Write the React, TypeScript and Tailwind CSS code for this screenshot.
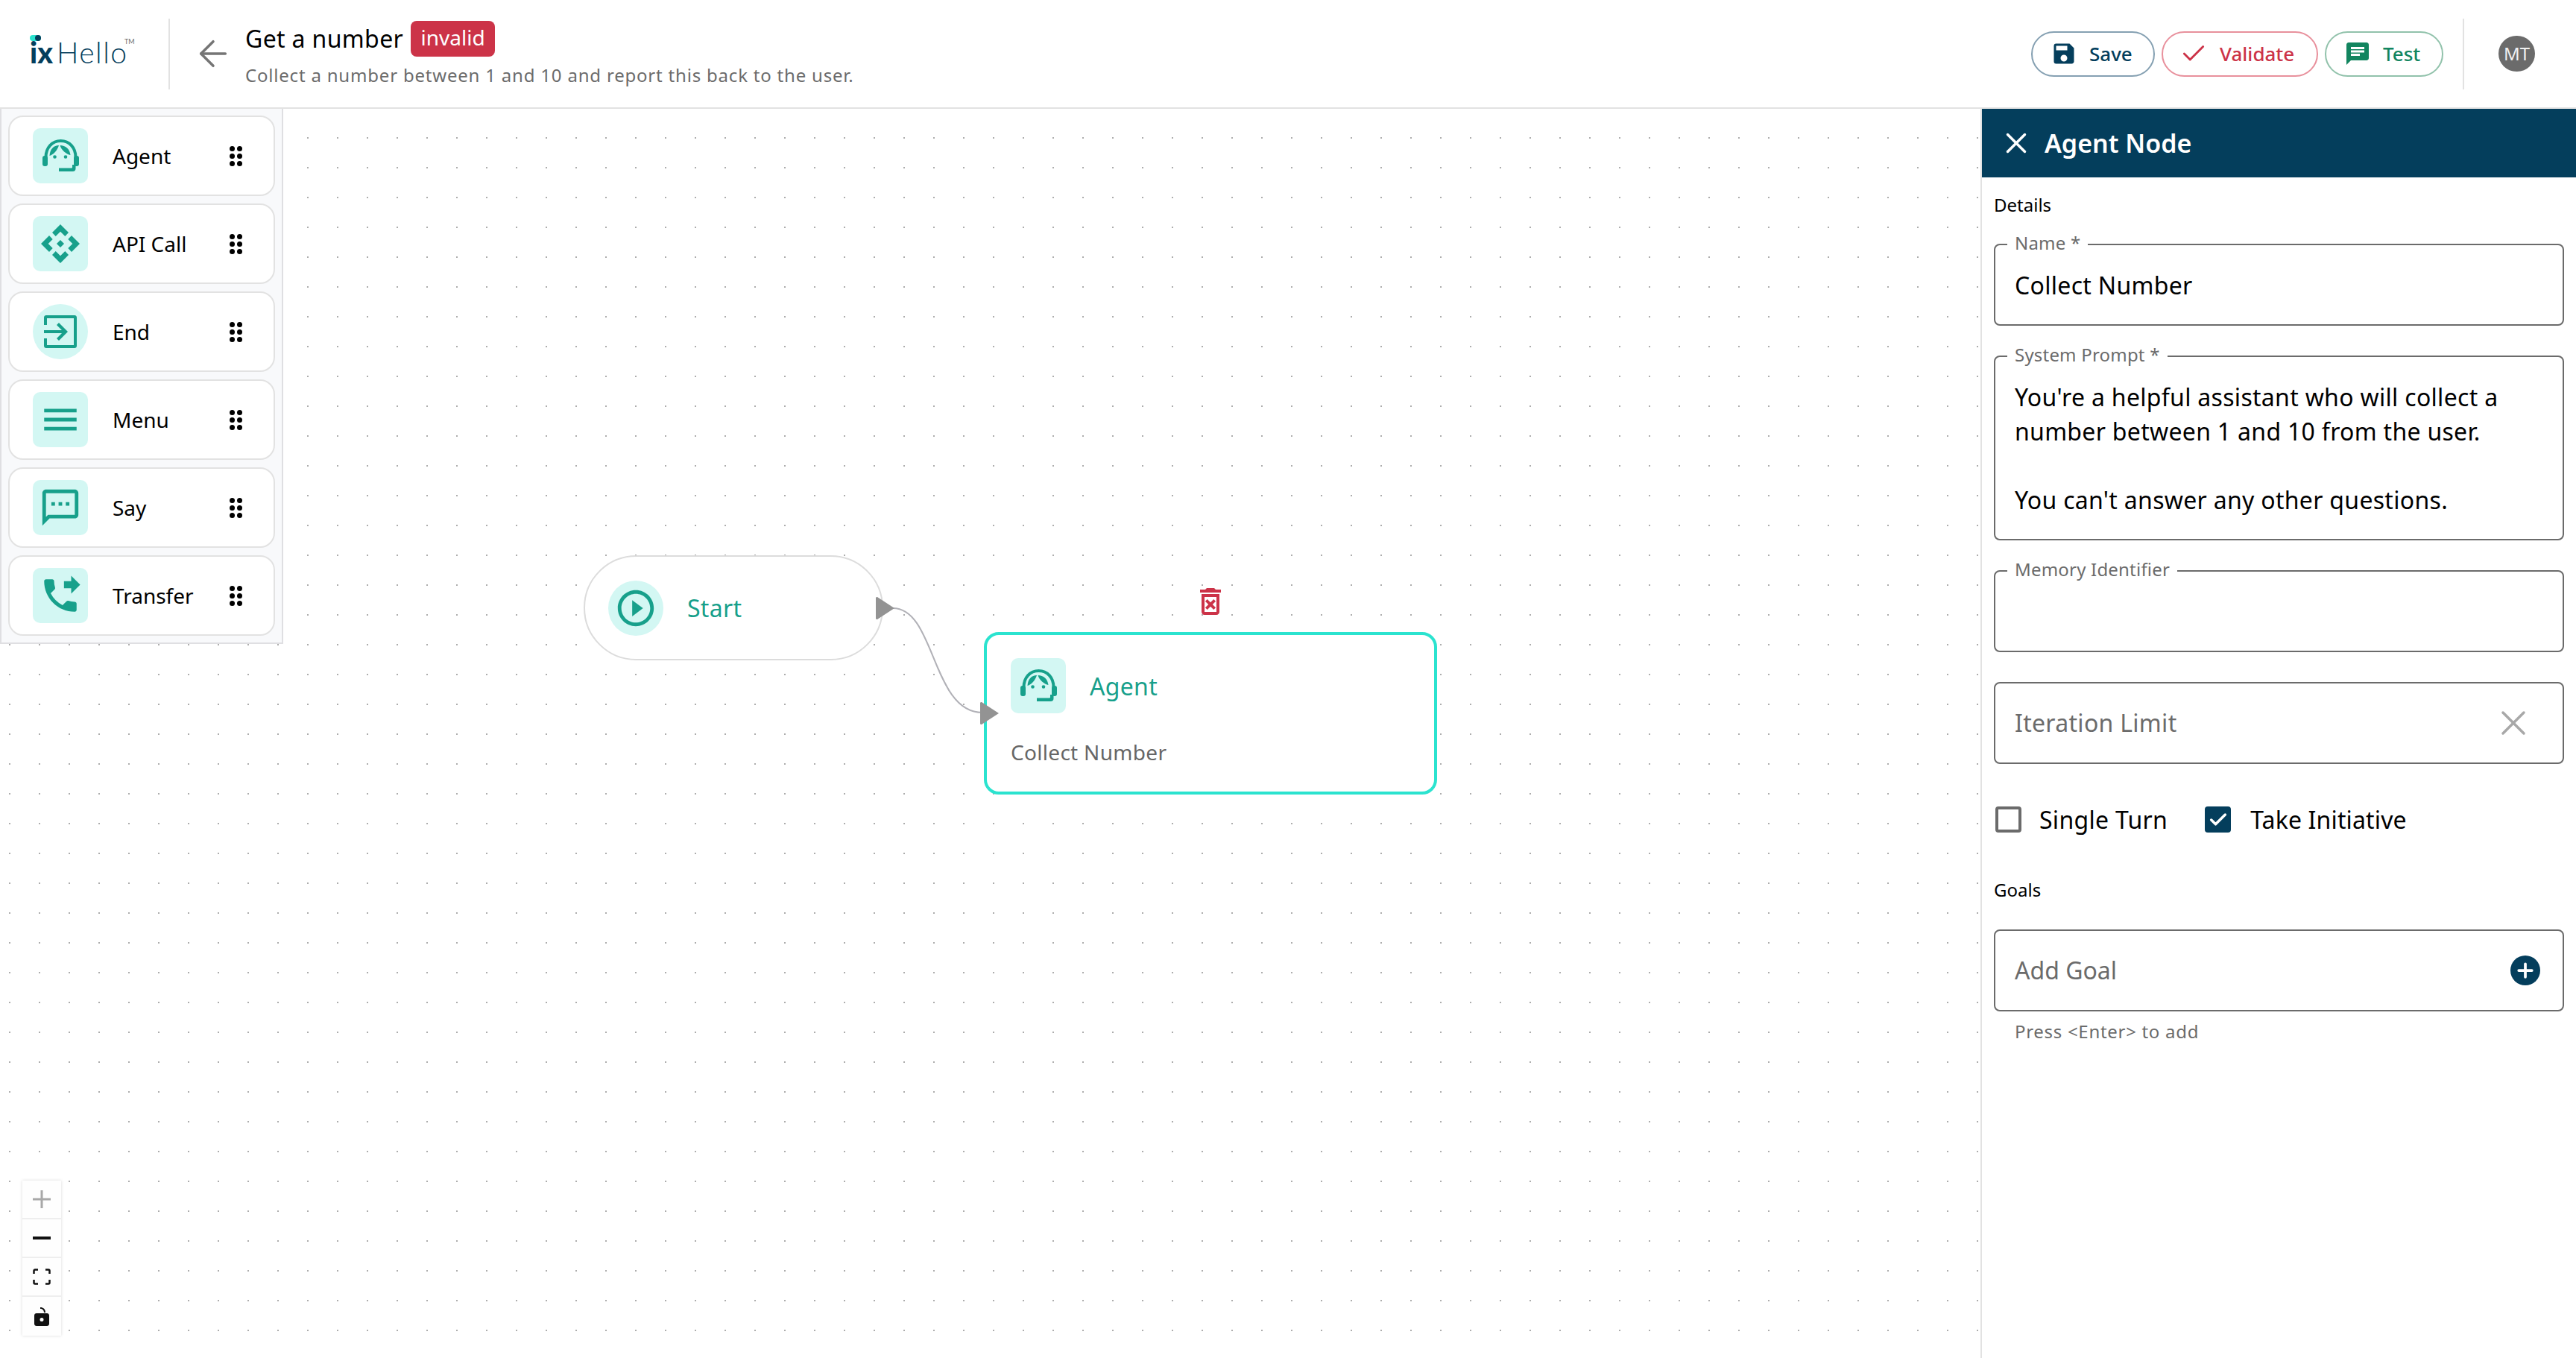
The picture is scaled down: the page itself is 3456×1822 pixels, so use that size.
import { Check, Plus, X, ArrowLeft } from "lucide-react";
import { MdChat, MdMenu, MdOutlineDeleteForever, MdOutlineSms, MdPhoneForwarded, MdPlayCircleOutline, MdSave } from "react-icons/md";

const teal = "#17a08b";

const AgentIcon = () => (
  <svg viewBox="0 0 49 44" className="w-[49px] h-[44px]" fill={teal}>
    <path d="M4.500 24C4.500 11 13 2 24.500 2S44.500 11 44.500 24" fill="none" stroke={teal} strokeWidth="4" />
    <rect x="0" y="22" width="7" height="14" rx="3" />
    <rect x="42" y="22" width="7" height="14" rx="3" />
    <path d="M22 8C15 8 10 13 9.500 22 15 20 19.500 15.500 22 8Z" />
    <path d="M23.500 8C25 14 32 20 37.500 21 36.500 13 31 8 23.500 8Z" />
    <circle cx="16.500" cy="23.500" r="2.300" />
    <circle cx="31" cy="23.500" r="2.300" />
    <path d="M44.500 34v5a4 4 0 0 1-4 4H22v-4.500h17a1 1 0 0 0 1-1V34Z" />
  </svg>
);

const ApiIcon = () => (
  <svg viewBox="0 0 52 52" className="w-[52px] h-[52px]" fill={teal}>
    <path d="M26 0l11 11-4.700 5L26 9.700 19.700 16 15 11Z" />
    <path d="M0 26l11-11 4.700 5L9.700 26l6 6L11 37Z" />
    <path d="M52 26 41 15l-4.700 5 6 6-6 6L41 37Z" />
    <path d="M26 52 15 41l4.700-5 6.300 6.300L32.300 36 37 41Z" />
    <path d="M26 21l5 5-5 5-5-5Z" />
  </svg>
);

const EndIcon = () => (
  <svg viewBox="0 0 44 44" className="w-11 h-11" fill={teal}>
    <path d="M3 0h38c1.700 0 3 1.300 3 3v38c0 1.700-1.300 3-3 3H3c-1.700 0-3-1.300-3-3V31h4v9h36V4H4v9H0V3c0-1.700 1.300-3 3-3Z" />
    <path d="M0 20h24l-7-7 3-3 12 12-12 12-3-3 7-7H0Z" />
  </svg>
);

const DragDots = () => (
  <div className="grid grid-cols-2 gap-x-[3px] gap-y-[3px] w-[17px]">
    {[0, 1, 2, 3, 4, 5].map((i) => (
      <span key={i} className="w-[7px] h-[7px] rounded-full bg-black" />
    ))}
  </div>
);

const items = [
  { label: "Agent", icon: <AgentIcon />, round: false },
  { label: "API Call", icon: <ApiIcon />, round: false },
  { label: "End", icon: <EndIcon />, round: true },
  { label: "Menu", icon: <MdMenu size={58} color={teal} />, round: false },
  { label: "Say", icon: <MdOutlineSms size={58} color={teal} />, round: false },
  { label: "Transfer", icon: <MdPhoneForwarded size={58} color={teal} />, round: false },
];

const Field = ({ label, children, className = "" }: { label: string; children?: React.ReactNode; className?: string }) => (
  <div className={`relative border-2 border-[#6b6b6b] rounded-[8px] pl-[26px] ${className}`}>
    <span className="absolute left-[16px] top-[-16px] px-[10px] bg-white text-[24px] leading-[26px] tracking-[0.2px] text-[#6b6b6b]">{label}</span>
    {children}
  </div>
);

const Handle = ({ className }: { className: string }) => (
  <svg className={`absolute ${className}`} width="26" height="32" viewBox="0 0 26 32">
    <path d="M2 1 25 16 2 31a1.500 1.500 0 0 1-2-1.500V2.500A1.500 1.500 0 0 1 2 1Z" fill="#939393" />
  </svg>
);

export default function App() {
  return (
    <div className="w-[3456px] h-[1822px] flex flex-col bg-white font-['Noto_Sans',sans-serif] overflow-hidden">
      <header className="h-[146px] shrink-0 flex items-center border-b-2 border-[#e2e2e2]">
        <div className="w-[228px] h-[95px] shrink-0 border-r-2 border-[#e2e2e2] flex items-center pl-[40px]">
          <div className="relative flex items-end h-[31px] mt-[-4px] font-['Lato',sans-serif] text-[#043e5c]">
            <span className="relative text-[39px] font-black leading-[31px]">
              ix
              <span className="absolute left-0 top-[-8px] w-[15px] h-[8px] rounded-full bg-[#2be3cf]">
                <span className="absolute right-0 top-0 w-[8px] h-[8px] rounded-full bg-[#043e5c]" />
              </span>
            </span>
            <span className="ml-[5px] text-[39px] font-light leading-[31px] tracking-[1.5px]">Hello</span>
            <span className="absolute left-[127px] top-[-4px] text-[9px] leading-[9px] text-[#6b6b6b]">TM</span>
          </div>
        </div>
        <ArrowLeft className="ml-[30px] w-[56px] h-[56px] text-[#757575]" strokeWidth={1.5} />
        <div className="ml-[15px] flex flex-col">
          <div className="flex items-center gap-[10px] h-[48px]">
            <span className="text-[32px] leading-[44px] tracking-[0.35px] text-black">Get a number</span>
            <span className="h-[48px] w-[113px] rounded-[8px] bg-[#cc3348] text-white text-[28px] leading-[44px] text-center">invalid</span>
          </div>
          <span className="text-[24px] leading-[32px] mt-[9px] text-[#6b6b6b] tracking-[0.8px]">
            Collect a number between 1 and 10 and report this back to the user.
          </span>
        </div>
        <div className="ml-auto flex items-center gap-[9px]">
          <button className="h-[61px] w-[166px] rounded-full border-2 border-[#85a0b2] flex items-center pl-[24px] gap-[16px] text-[26px] font-medium text-[#043e5c]">
            <MdSave size={36} color="#043e5c" />
            Save
          </button>
          <button className="h-[61px] w-[210px] rounded-full border-2 border-[#e8909c] flex items-center pl-[22px] gap-[16px] text-[26px] font-medium text-[#cc3348]">
            <Check className="w-[38px] h-[38px]" strokeWidth={1.8} />
            Validate
          </button>
          <button className="h-[61px] w-[159px] rounded-full border-2 border-[#91c2ab] flex items-center pl-[24px] gap-[16px] text-[26px] font-medium text-[#12855f]">
            <MdChat size={36} color="#12855f" />
            Test
          </button>
        </div>
        <div className="ml-[26px] w-[2px] h-[95px] bg-[#e2e2e2]" />
        <div className="ml-[46px] mr-[55px] w-[49px] h-[48px] rounded-full bg-[#6b6b6b] text-[#f0f0f0] text-[24px] leading-[48px] text-center">MT</div>
      </header>

      <div className="flex-1 flex min-h-0">
        <main className="relative flex-1 overflow-hidden bg-white bg-[radial-gradient(circle,#adadad_1.2px,transparent_1.4px)] bg-[size:40px_40px] bg-[position:-7px_-21px]">
          <aside className="absolute left-0 top-0 w-[380px] h-[718px] bg-[#f8f9fb] border-l-2 border-r-2 border-b-2 border-[#dfdfe2] pl-[9px] pr-[9px] pt-[9px] flex flex-col gap-[10px]">
            {items.map((it) => (
              <div key={it.label} className="h-[108px] shrink-0 bg-white border-2 border-[#e2e2e2] rounded-[20px] flex items-center pl-[31px]">
                <div className={`w-[74px] h-[74px] shrink-0 bg-[#d3f7f3] flex items-center justify-center ${it.round ? "rounded-full" : "rounded-[10px]"}`}>
                  {it.icon}
                </div>
                <span className="ml-[33px] text-[28px] text-black w-[157px]">{it.label}</span>
                <DragDots />
              </div>
            ))}
          </aside>

          {/* edge between the two nodes */}
          <svg className="absolute left-0 top-0" width="2657" height="1676" fill="none">
            <path d="M1198 670 C1255 670 1250 810 1318 810" stroke="#b1b1b7" strokeWidth="2" />
          </svg>

          <div className="absolute left-[783px] top-[599px] w-[402px] h-[141px] rounded-full bg-white border-2 border-[#dcdcdc] flex items-center pl-[31px]">
            <div className="w-[74px] h-[74px] rounded-full bg-[#d3f7f3] flex items-center justify-center">
              <MdPlayCircleOutline size={58} color={teal} />
            </div>
            <span className="ml-[32px] text-[32px] tracking-[0.3px] text-[#17a08b]">Start</span>
          </div>
          <Handle className="left-[1175px] top-[654px]" />

          <MdOutlineDeleteForever className="absolute left-[1600px] top-[637px]" size={48} color="#cc3348" />

          <div className="absolute left-[1320px] top-[702px] w-[608px] h-[218px] rounded-[20px] bg-white border-[4px] border-[#2be3cf] pl-[32px] pt-[31px]">
            <div className="flex items-center">
              <div className="w-[74px] h-[74px] rounded-[10px] bg-[#d3f7f3] flex items-center justify-center">
                <AgentIcon />
              </div>
              <span className="ml-[32px] mt-[2px] text-[32px] tracking-[0.3px] text-[#17a08b]">Agent</span>
            </div>
            <div className="mt-[33px] text-[28px] leading-[38px] tracking-[0.3px] text-[#666666]">Collect Number</div>
          </div>
          <Handle className="left-[1315px] top-[795px]" />

          <div className="absolute left-[30px] top-[1438px] w-[52px] bg-[#fefefe] shadow-[0_0_4px_rgba(0,0,0,0.15)] flex flex-col">
            <div className="h-[52px] flex items-center justify-center border-b-2 border-[#eeeeee]">
              <svg width="24" height="24" viewBox="0 0 24 24" fill="#a8a8a8"><path d="M10.500 0h3v10.500H24v3H13.500V24h-3V13.500H0v-3h10.500Z" /></svg>
            </div>
            <div className="h-[52px] flex items-center justify-center border-b-2 border-[#eeeeee]">
              <svg width="24" height="4" viewBox="0 0 24 4" fill="#111"><rect width="24" height="4" /></svg>
            </div>
            <div className="h-[52px] flex items-center justify-center border-b-2 border-[#eeeeee]">
              <svg width="24" height="22" viewBox="0 0 24 22" fill="none" stroke="#111" strokeWidth="2.500">
                <path d="M7 1.500H3A1.500 1.500 0 0 0 1.500 3v4M17 1.500h4A1.500 1.500 0 0 1 22.500 3v4M7 20.500H3A1.500 1.500 0 0 1 1.500 19v-4M17 20.500h4a1.500 1.500 0 0 0 1.500-1.500v-4" />
              </svg>
            </div>
            <div className="h-[52px] flex items-center justify-center">
              <svg width="20" height="25" viewBox="0 0 20 25" fill="#111">
                <path d="M3 8h14c1.700 0 3 1.300 3 3v11c0 1.700-1.300 3-3 3H3c-1.700 0-3-1.300-3-3V11c0-1.700 1.300-3 3-3Zm7 6a2.500 2.500 0 1 0 0 5 2.500 2.500 0 0 0 0-5Z" fillRule="evenodd" />
                <path d="M8 0c4 0 7 2.500 7 7h-2c0-3-2-5-5-5Z" />
              </svg>
            </div>
          </div>
        </main>

        <section className="w-[799px] shrink-0 border-l-2 border-[#e2e2e2] flex flex-col">
          <div className="h-[92px] shrink-0 bg-[#043e5c] flex items-center pl-[23px] text-white">
            <X className="w-[46px] h-[46px]" strokeWidth={1.8} />
            <span className="ml-[15px] text-[34px] font-semibold leading-none">Agent Node</span>
          </div>
          <div className="pl-[16px] pr-[16px] flex flex-col">
            <div className="mt-[20px] text-[24px] leading-[34px] text-black">Details</div>
            <Field label="Name *" className="h-[110px] mt-[35px] pt-[32px]">
              <div className="text-[32px] leading-[44px] tracking-[0.3px] text-black">Collect Number</div>
            </Field>
            <Field label="System Prompt *" className="h-[248px] mt-[40px] pt-[31px]">
              <div className="text-[32px] leading-[46px] tracking-[0.3px] text-black">
                You're a helpful assistant who will collect a<br />
                number between 1 and 10 from the user.<br />
                <br />
                You can't answer any other questions.
              </div>
            </Field>
            <Field label="Memory Identifier" className="h-[110px] mt-[40px]" />
            <div className="mt-[40px] h-[110px] border-2 border-[#6b6b6b] rounded-[8px] flex items-center justify-between pl-[26px] pr-[38px]">
              <span className="text-[32px] tracking-[0.3px] text-[#6b6b6b]">Iteration Limit</span>
              <X className="w-[56px] h-[56px] text-[#a8a8a8]" strokeWidth={1.5} />
            </div>
            <div className="mt-[57px] flex items-center h-[35px] pl-[2px]">
              <span className="w-[35px] h-[35px] rounded-[4px] border-[4px] border-[#6b6b6b]" />
              <span className="ml-[24px] text-[32px] leading-[44px] tracking-[0.3px] text-black">Single Turn</span>
              <span className="ml-[50px] w-[35px] h-[35px] rounded-[4px] bg-[#043e5c] flex items-center justify-center">
                <Check className="w-[28px] h-[28px] text-white" strokeWidth={3} />
              </span>
              <span className="ml-[26px] text-[32px] leading-[44px] tracking-[0.15px] text-black">Take Initiative</span>
            </div>
            <div className="mt-[60px] text-[24px] leading-[34px] text-black">Goals</div>
            <div className="mt-[36px] h-[110px] border-2 border-[#6b6b6b] rounded-[8px] flex items-center justify-between pl-[26px] pr-[30px]">
              <span className="text-[32px] text-[#6b6b6b]">Add Goal</span>
              <span className="w-[40px] h-[40px] rounded-full bg-[#043e5c] flex items-center justify-center">
                <Plus className="w-[30px] h-[30px] text-white" strokeWidth={3} />
              </span>
            </div>
            <div className="mt-[11px] pl-[28px] text-[24px] leading-[32px] text-[#6b6b6b] tracking-[0.7px]">Press &lt;Enter&gt; to add</div>
          </div>
        </section>
      </div>
    </div>
  );
}
